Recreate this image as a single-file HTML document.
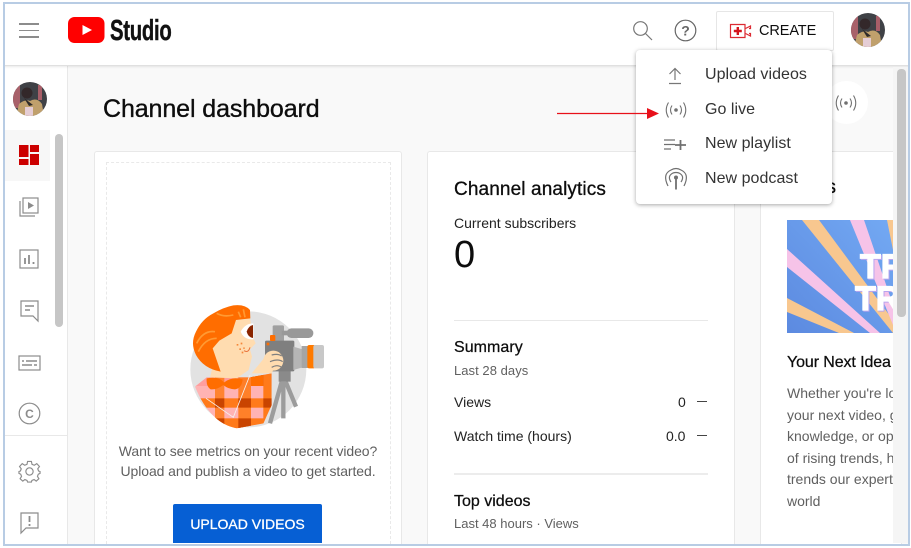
<!DOCTYPE html>
<html><head><meta charset="utf-8"><style>
html,body{margin:0;padding:0;width:911px;height:548px;overflow:hidden;background:#fff}
#r{position:relative;width:911px;height:548px;overflow:hidden;background:#f9f9f9;font-family:"Liberation Sans",sans-serif;color:#0d0d0d}
.a{position:absolute}
.t{position:absolute;white-space:nowrap}
.g{color:#606060}
svg{position:absolute;overflow:visible}
.card{position:absolute;background:#fff;border:1px solid #e8e8e8;border-bottom:0;border-radius:3px 3px 0 0}
</style></head><body><div id="r">

<!-- cards -->
<div class="card" style="left:94px;top:151px;width:306px;height:392px"></div>
<div class="a" style="left:106px;top:162px;width:283px;height:381px;border:1px dashed #e9e9e9;border-bottom:0"></div>
<div class="card" style="left:427px;top:151px;width:306px;height:392px"></div>
<div class="card" style="left:760px;top:151px;width:140px;height:392px"></div>

<!-- sidebar -->
<div class="a" style="left:0;top:66px;width:67px;height:482px;background:#fff;border-right:1px solid #e8e8e8"></div>
<div class="a" style="left:4px;top:130px;width:46px;height:51px;background:#f7f7f7"></div>
<div class="a" style="left:4px;top:435px;width:63px;height:1px;background:#e8e8e8"></div>
<div class="a" style="left:55px;top:134px;width:8px;height:193px;background:#c6c6c6;border-radius:4px"></div>

<!-- sidebar avatar -->
<svg style="left:13px;top:82px" width="34" height="34" viewBox="0 0 34 34"><defs><clipPath id="c1"><circle cx="17" cy="17" r="17"/></clipPath></defs><g clip-path="url(#c1)"><rect width="34" height="34" fill="#3f4146"/><rect x="0" width="7" height="26" fill="#a8616a"/><rect x="25" y="3" width="4" height="15" fill="#a85e68"/><path d="M3 34 L6 22 Q12 17 17 19 Q24 15 29 22 L31 34Z" fill="#c0a06c"/><circle cx="14" cy="11" r="5.500" fill="#33282a"/><path d="M11 16L20 23L16 24Z" fill="#2e2a2a"/><rect x="12" y="25" width="8" height="9" fill="#e5cdd5"/></g></svg>

<!-- sidebar icons -->
<svg style="left:19px;top:145px" width="21" height="21" viewBox="0 0 21 21"><path fill="#cc0000" d="M0 0H9.500V12H0ZM11 0H20V7H11ZM0 14H9.500V20H0ZM11 9H20V20H11Z"/></svg>
<svg style="left:19px;top:197px" width="21" height="21" viewBox="0 0 21 21" fill="none" stroke="#8c8c8c" stroke-width="1.200"><rect x="4" y="1" width="15" height="15"/><path d="M1 4V19H16"/><path d="M9 5L15 8.500L9 12Z" fill="#8c8c8c" stroke="none"/></svg>
<svg style="left:19px;top:249px" width="21" height="21" viewBox="0 0 21 21" fill="none" stroke="#8c8c8c" stroke-width="1.200"><rect x="1" y="1" width="18" height="18"/><path d="M6 9V15M10 6V15M14.500 13V15" stroke-width="1.800"/></svg>
<svg style="left:20px;top:300px" width="20" height="22" viewBox="0 0 20 22" fill="none" stroke="#8c8c8c" stroke-width="1.200"><path d="M1 1H18V21L13 16H1Z"/><path d="M5 6H14M5 10H10" stroke-width="1.500"/></svg>
<svg style="left:18px;top:355px" width="23" height="17" viewBox="0 0 23 17" fill="none" stroke="#8c8c8c" stroke-width="1.200"><rect x="1" y="1" width="21" height="14"/><path d="M4 6H6M8 6H19M4 10H14M16 10H19" stroke-width="1.500"/></svg>
<svg style="left:18px;top:402px" width="23" height="23" viewBox="0 0 23 23" fill="none" stroke="#8c8c8c" stroke-width="1.200"><circle cx="11.500" cy="11.500" r="10.300"/><text x="11.500" y="16" font-size="12" font-weight="bold" text-anchor="middle" fill="#8c8c8c" stroke="none" font-family="Liberation Sans">C</text></svg>
<svg style="left:18px;top:460px" width="23" height="23" viewBox="0 0 24 24" fill="none" stroke="#8c8c8c" stroke-width="1.200"><circle cx="12" cy="12" r="3.800"/><path d="M10 1.500H14L14.600 4.500L17 5.500L19.600 3.800L22.400 6.800L20.600 9.200L21.500 11.500L23 12V14L21.200 14.800L20.300 17L21.800 19.600L19 22L16.800 20.400L14.500 21.300L14 23H10L9.400 21.300L7.200 20.400L5 22L2.200 19.600L3.700 17L2.800 14.800L1 14V12L2.500 11.500L3.400 9.200L1.600 6.800L4.400 3.800L7 5.500L9.400 4.500Z"/></svg>
<svg style="left:20px;top:512px" width="19" height="22" viewBox="0 0 19 22" fill="none" stroke="#8c8c8c" stroke-width="1.200"><path d="M1 1H18V16H6L1 21Z"/><path d="M9.500 4V10M9.500 12V14" stroke-width="1.800"/></svg>

<!-- header -->
<div class="a" style="left:0;top:0;width:911px;height:65px;background:#fff;box-shadow:0 1px 3px rgba(0,0,0,.16)"></div>
<div class="a" style="left:19px;top:23px;width:20px;height:1.500px;background:#8c8c8c"></div>
<div class="a" style="left:19px;top:29.500px;width:20px;height:1.500px;background:#8c8c8c"></div>
<div class="a" style="left:19px;top:36px;width:20px;height:1.500px;background:#8c8c8c"></div>
<svg style="left:68px;top:17px" width="37" height="27" viewBox="0 0 37 27"><rect width="36.500" height="26" rx="6.500" fill="#f00"/><path d="M14.500 8L24 13L14.500 18Z" fill="#fff"/></svg>
<div class="t" style="left:110px;top:14px;font-size:29px;line-height:34px;font-weight:bold;color:#111;transform:scaleX(.7);transform-origin:0 0;letter-spacing:-.4px;-webkit-text-stroke:.4px #111">Studio</div>

<svg style="left:633px;top:21px" width="20" height="20" viewBox="0 0 20 20" fill="none" stroke="#777" stroke-width="1.200"><circle cx="7.500" cy="7.500" r="6.800"/><path d="M12.500 12.500L19 19"/></svg>
<svg style="left:674px;top:19px" width="23" height="23" viewBox="0 0 23 23" fill="none" stroke="#666" stroke-width="1.200"><circle cx="11.500" cy="11.500" r="10.300"/><text x="11.500" y="16.500" font-size="14" font-weight="bold" text-anchor="middle" fill="#666" stroke="none" font-family="Liberation Sans">?</text></svg>

<div class="a" style="left:716px;top:11px;width:116px;height:38px;background:#fff;border:1px solid #e6e6e6;border-radius:2px"></div>
<svg style="left:729px;top:23px" width="23" height="16" viewBox="0 0 23 16" fill="none" stroke="#dc2a32" stroke-width="1.200"><path d="M1.500 1.500H16V14.500H1.500Z"/><path d="M16.500 5.500L21.500 3V5.500H20M20 10.500H21.500V13L16.500 10.500"/><path d="M8.800 4V12M4.800 8H12.800" stroke="#d4141c" stroke-width="2.400"/></svg>
<div class="t" style="left:759px;top:21.500px;font-size:14.500px;line-height:18px;letter-spacing:-.1px;color:#0d0d0d">CREATE</div>

<svg style="left:851px;top:13px" width="34" height="34" viewBox="0 0 34 34"><defs><clipPath id="c2"><circle cx="17" cy="17" r="17"/></clipPath></defs><g clip-path="url(#c2)"><rect width="34" height="34" fill="#3f4146"/><rect x="0" width="7" height="26" fill="#a8616a"/><rect x="25" y="3" width="4" height="15" fill="#a85e68"/><path d="M3 34 L6 22 Q12 17 17 19 Q24 15 29 22 L31 34Z" fill="#c0a06c"/><circle cx="14" cy="11" r="5.500" fill="#33282a"/><path d="M11 16L20 23L16 24Z" fill="#2e2a2a"/><rect x="12" y="25" width="8" height="9" fill="#e5cdd5"/></g></svg>

<!-- right scrollbar strip -->
<div class="a" style="left:893px;top:67px;width:15px;height:476px;background:#f5f5f5"></div>
<div class="a" style="left:897px;top:69px;width:9px;height:248px;background:#c6c6c6;border-radius:4px"></div>

<!-- page title -->
<div class="t" style="left:103px;top:94px;font-size:25px;line-height:30px;color:#0d0d0d;letter-spacing:-.1px;-webkit-text-stroke:.35px #0d0d0d">Channel dashboard</div>
<div class="a" style="left:825px;top:81px;width:43px;height:43px;border-radius:50%;background:#fff"></div>
<svg style="left:834px;top:95px" width="24" height="16" viewBox="0 0 24 16" fill="none" stroke="#707070" stroke-width="1.100"><circle cx="12" cy="8" r="1.800" fill="#707070" stroke="none"/><path d="M8 3.500Q5 8 8 12.500M16 3.500Q19 8 16 12.500M4.500 .5Q0 8 4.500 15.500M19.500 .5Q24 8 19.500 15.500"/></svg>

<!-- illustration -->
<svg style="left:170px;top:290px" width="170" height="150" viewBox="0 0 510 450">
<defs><clipPath id="sh"><path d="M75 290L110 262L240 262L305 250V345L280 400L200 415Q120 400 75 290Z"/></clipPath></defs>
<circle cx="235" cy="238" r="174" fill="#e2e2e2"/>
<!-- tripod -->
<path d="M335 275L300 400M340 275V385M347 275L378 350" stroke="#9c9c9c" stroke-width="13" fill="none"/>
<rect x="326" y="243" width="36" height="32" fill="#8a8a8a"/>
<!-- camera -->
<rect x="308" y="106" width="34" height="50" rx="4" fill="#a0a0a0"/>
<rect x="350" y="115" width="80" height="29" rx="14" fill="#999"/>
<rect x="335" y="122" width="25" height="14" fill="#999"/>
<rect x="285" y="152" width="88" height="92" rx="4" fill="#7f7f7f"/>
<path d="M370 170L398 178V232L370 240Z" fill="#b5b5b5"/>
<rect x="395" y="168" width="25" height="66" fill="#a5a5a5"/>
<rect x="412" y="165" width="24" height="70" rx="6" fill="#ff7a00"/>
<rect x="430" y="165" width="32" height="70" rx="6" fill="#c8c8c8"/>
<rect x="300" y="135" width="16" height="18" rx="3" fill="#ff6d00"/>
<rect x="290" y="158" width="8" height="8" fill="#ff6d00"/>
<!-- shirt -->
<g clip-path="url(#sh)">
<rect x="60" y="240" width="260" height="190" fill="#ffb3b3"/>
<rect x="60" y="325" width="260" height="28" fill="#ff7a1a"/>
<rect x="60" y="385" width="260" height="30" fill="#ff7a1a"/>
<rect x="60" y="250" width="260" height="38" fill="#ff8a8a" opacity=".5"/>
<rect x="135" y="240" width="28" height="190" fill="#ff7a1a" opacity=".85"/>
<rect x="205" y="240" width="38" height="190" fill="#ff7a1a" opacity=".9"/>
<rect x="280" y="240" width="30" height="190" fill="#ff7a1a"/>
<path d="M135 325H163V353H135ZM205 325H243V353H205ZM280 325H310V353H280ZM205 385H243V415H205ZM135 385H163V415H135ZM243 250H280V288H243Z" fill="#c94400"/>
<path d="M243 250H280V288H243Z" fill="#ff6d00"/>
</g>
<path d="M108 325L190 382L240 255" stroke="#f4f0ee" fill="none" stroke-width="2.500"/>
<!-- neck & face -->
<path d="M200 90L240 85L250 145L257 160L240 178L246 200L236 240L200 265L120 262L135 200L150 130Z" fill="#ffdcb0"/>
<ellipse cx="155" cy="180" rx="28" ry="28" fill="#ffdcb0"/>
<!-- arm + hand -->
<path d="M245 250L290 195L325 205L305 250Z" fill="#ffdcb0"/>
<ellipse cx="310" cy="212" rx="30" ry="30" fill="#ffdcb0"/>
<path d="M305 195Q325 190 335 198M300 215Q325 205 338 215M305 232Q322 222 335 232" stroke="#7f7f7f" stroke-width="3.500" fill="none"/>
<!-- hair -->
<path d="M130 70Q160 52 190 46Q225 42 240 60L241 85L198 90L185 130L148 152L128 175L152 245Q100 235 78 195Q60 160 78 125Q95 88 130 70Z" fill="#ff6d00"/>
<path d="M80 160Q100 120 135 125M85 185Q105 145 140 145M140 70Q160 82 190 75M205 65L212 82M220 58L225 82" stroke="#ff9a33" fill="none" stroke-width="5"/>
<!-- collar -->
<path d="M110 265Q150 258 162 278Q185 258 218 268Q215 295 195 298Q175 298 160 285Q140 300 122 298Q108 290 110 265Z" fill="#ff6d00"/>
<!-- eye -->
<path d="M212 125Q225 100 250 100V148Q222 150 212 125Z" fill="#fff"/>
<path d="M230 125Q235 108 249 105V144Q234 142 230 125Z" fill="#8a2500"/>
<path d="M200 162h5v5h-5zM212 158h5v5h-5zM208 175h5v5h-5zM220 172h4v5h-4zM215 185h5v5h-5z" fill="#f5873a"/>
<path d="M222 182Q235 190 240 172" stroke="#e8713a" fill="none" stroke-width="3"/>
</svg>

<!-- left card text -->
<div class="t g" style="left:94px;top:440px;width:308px;text-align:center;font-size:14px;line-height:22px;letter-spacing:-.08px">Want to see metrics on your recent video?</div>
<div class="t g" style="left:94px;top:460px;width:308px;text-align:center;font-size:14px;line-height:22px;letter-spacing:-.08px">Upload and publish a video to get started.</div>
<div class="a" style="left:173px;top:504px;width:149px;height:39px;background:#065fd4;border-radius:2px 2px 0 0"></div>
<div class="t" style="left:173px;top:513.500px;width:149px;text-align:center;font-size:14px;line-height:20px;color:#fff;-webkit-text-stroke:.3px #fff;letter-spacing:0">UPLOAD VIDEOS</div>

<!-- analytics -->
<div class="t" style="left:454px;top:178px;font-size:19px;line-height:24px;-webkit-text-stroke:.3px #0d0d0d;letter-spacing:.12px">Channel analytics</div>
<div class="t" style="left:454px;top:214px;font-size:14px;line-height:18px;letter-spacing:0;color:#222">Current subscribers</div>
<div class="t" style="left:454px;top:233px;font-size:38px;line-height:44px;color:#0d0d0d">0</div>
<div class="a" style="left:454px;top:320px;width:254px;height:1px;background:#e8e8e8"></div>
<div class="t" style="left:454px;top:339px;font-size:16px;line-height:18px;-webkit-text-stroke:.25px #0d0d0d;letter-spacing:.05px">Summary</div>
<div class="t g" style="left:454px;top:362px;font-size:13px;line-height:18px;letter-spacing:.05px">Last 28 days</div>
<div class="t" style="left:454px;top:393px;font-size:14px;line-height:18px;color:#222">Views</div>
<div class="t" style="left:678px;top:393px;font-size:14px;line-height:18px;color:#222">0</div>
<div class="a" style="left:697px;top:401px;width:10px;height:1px;background:#444"></div>
<div class="t" style="left:454px;top:427px;font-size:14px;line-height:18px;color:#222;letter-spacing:0">Watch time (hours)</div>
<div class="t" style="left:666px;top:427px;font-size:14px;line-height:18px;color:#222">0.0</div>
<div class="a" style="left:697px;top:435px;width:10px;height:1px;background:#444"></div>
<div class="a" style="left:454px;top:473px;width:254px;height:2px;background:#ececec"></div>
<div class="t" style="left:454px;top:493px;font-size:16px;line-height:18px;-webkit-text-stroke:.25px #0d0d0d">Top videos</div>
<div class="t g" style="left:454px;top:515px;font-size:13px;line-height:18px;letter-spacing:0">Last 48 hours · Views</div>

<!-- third card -->
<div class="a" style="left:761px;top:151px;width:132px;height:392px;overflow:hidden">
  <div class="t" style="right:57px;top:25px;font-size:19px;line-height:24px;-webkit-text-stroke:.3px #0d0d0d">Ideas</div>
  <svg style="left:26px;top:69px" width="106" height="113" viewBox="0 0 106 113">
    <defs><linearGradient id="bg" x1="1" y1="0" x2="0" y2="1"><stop offset="0" stop-color="#73a9f3"/><stop offset="1" stop-color="#5c8ae0"/></linearGradient></defs>
    <rect width="106" height="113" fill="url(#bg)"/>
    <path d="M15 0H32L106 100V113Z" fill="#f8c78f"/>
    <path d="M63 0H77L106 85V105Z" fill="#f6c3e8"/>
    <path d="M0 29L93 113H83L0 47Z" fill="#f6c3e8"/>
    <path d="M0 78L67 113H52L0 92Z" fill="#f8c78f"/>
    <path d="M100 0H106V30Z" fill="#f8c78f"/>
    <g font-size="34" font-weight="bold" font-family="Liberation Sans">
    <text x="74" y="59" fill="#b9a4ee" stroke="#b9a4ee" stroke-width="1.200">TR</text>
    <text x="73" y="58" fill="#fff" stroke="#fff" stroke-width="1.200">TR</text>
    <text x="69" y="91" fill="#b9a4ee" stroke="#b9a4ee" stroke-width="1.200">TR</text>
    <text x="68" y="90" fill="#fff" stroke="#fff" stroke-width="1.200">TR</text>
    </g>
  </svg>
  <div class="t" style="left:26px;top:202px;font-size:16px;line-height:20px;-webkit-text-stroke:.25px #0d0d0d;letter-spacing:-.1px">Your Next Idea</div>
  <div class="t g" style="left:26px;top:232px;font-size:14px;line-height:21.600px;letter-spacing:0">Whether you're looking for<br>your next video, get<br>knowledge, or opinions<br>of rising trends, here are<br>trends our experts<br>world</div>
</div>

<!-- menu -->
<div class="a" style="left:636px;top:50px;width:196px;height:154px;background:#fff;border-radius:4px;box-shadow:0 1px 4px rgba(0,0,0,.35)"></div>
<svg style="left:667px;top:67px" width="16" height="18" viewBox="0 0 16 18" fill="none" stroke="#777" stroke-width="1.200"><path d="M8 13V1.500M2.500 7L8 1.500L13.500 7M2 16.500H14"/></svg>
<svg style="left:664px;top:102px" width="24" height="16" viewBox="0 0 24 16" fill="none" stroke="#707070" stroke-width="1.100"><circle cx="12" cy="8" r="1.800" fill="#707070" stroke="none"/><path d="M8 3.500Q5 8 8 12.500M16 3.500Q19 8 16 12.500M4.500 .5Q0 8 4.500 15.500M19.500 .5Q24 8 19.500 15.500"/></svg>
<svg style="left:664px;top:138px" width="23" height="13" viewBox="0 0 23 13" fill="none" stroke="#707070" stroke-width="1.200"><path d="M0 2H11M0 6.500H11M0 11H7"/><path d="M11 7H22M16.500 2V12" stroke-width="1.800"/></svg>
<svg style="left:664px;top:167px" width="24" height="23" viewBox="0 0 24 23" fill="none" stroke="#707070" stroke-width="1.200"><path d="M4 19Q-2 7 7 3Q12 0 17 3Q26 7 20 19"/><path d="M7 15Q3 9 9 6Q12 5 15 6Q21 9 17 15"/><circle cx="12" cy="10.500" r="2" fill="#707070" stroke="none"/><path d="M12 11V22.500" stroke-width="1.800"/></svg>
<div class="t" style="left:705px;top:65px;font-size:16px;line-height:20px;color:#333;letter-spacing:.04px">Upload videos</div>
<div class="t" style="left:705px;top:99.500px;font-size:16px;line-height:20px;color:#333;letter-spacing:.04px">Go live</div>
<div class="t" style="left:705px;top:134px;font-size:16px;line-height:20px;color:#333;letter-spacing:.04px">New playlist</div>
<div class="t" style="left:705px;top:168.500px;font-size:16px;line-height:20px;color:#333;letter-spacing:.04px">New podcast</div>

<!-- red arrow -->
<svg style="left:557px;top:107px" width="102" height="13" viewBox="0 0 102 13"><path d="M0 6.500H92" stroke="#e8101a" stroke-width="1.200"/><path d="M90 1L102 6.500L90 12Z" fill="#e8101a"/></svg>

<!-- screenshot frame -->
<div class="a" style="left:0;top:0;width:911px;height:2px;background:#fff"></div>
<div class="a" style="left:0;top:0;width:3px;height:548px;background:#fff"></div>
<div class="a" style="left:0;top:546px;width:911px;height:2px;background:#fff"></div>
<div class="a" style="left:910px;top:0;width:1px;height:548px;background:#fff"></div>
<div class="a" style="left:3px;top:2px;width:907px;height:2px;background:#b8cce4"></div>
<div class="a" style="left:3px;top:2px;width:2px;height:544px;background:#b8cce4"></div>
<div class="a" style="left:3px;top:543.500px;width:907px;height:2.500px;background:#b8cce4"></div>
<div class="a" style="left:908px;top:2px;width:2px;height:544px;background:#b8cce4"></div>
</div></body></html>
